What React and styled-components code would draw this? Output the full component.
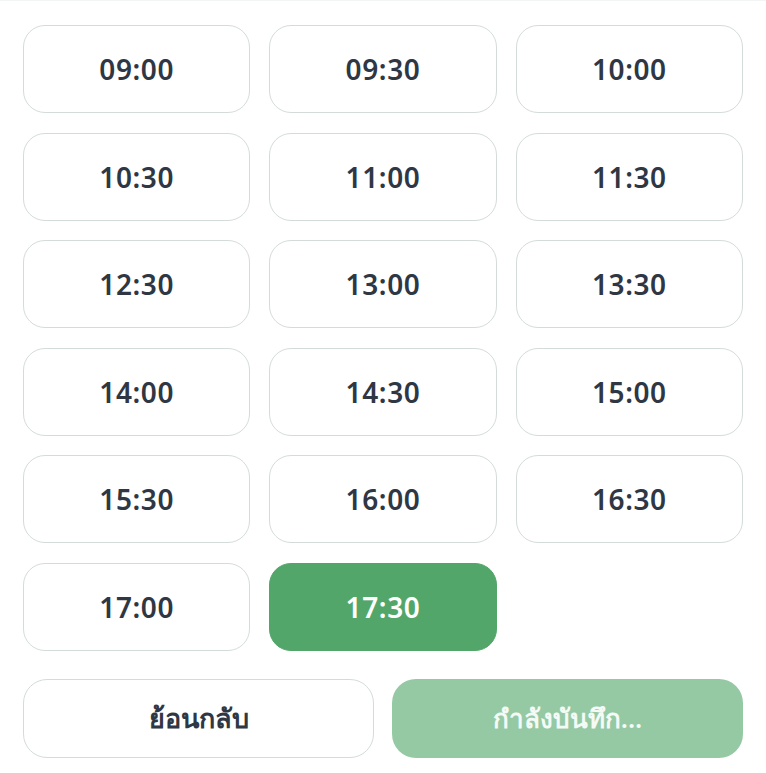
import styled, { createGlobalStyle } from "styled-components";

const GlobalStyle = createGlobalStyle`
  html, body {
    margin: 0;
    padding: 0;
    background: #ffffff;
  }
  body {
    font-family: "Noto Sans", "Open Sans", sans-serif;
  }
`;

const SLOTS = [
  "09:00", "09:30", "10:00",
  "10:30", "11:00", "11:30",
  "12:30", "13:00", "13:30",
  "14:00", "14:30", "15:00",
  "15:30", "16:00", "16:30",
  "17:00", "17:30",
];

function App() {
  const selected = "17:30";
  return (
    <>
      <GlobalStyle />
      <Page>
        <SlotGrid>
          {SLOTS.map((t) => (
            <SlotButton key={t} $active={t === selected}>
              {t}
            </SlotButton>
          ))}
        </SlotGrid>
        <Actions>
          <BackButton>ย้อนกลับ</BackButton>
          <SaveButton disabled>กำลังบันทึก...</SaveButton>
        </Actions>
      </Page>
    </>
  );
}

const Page = styled.div`
  width: 766px;
  height: 773px;
  box-sizing: border-box;
  padding: 24px 23px 0 23px;
  background: #fff;
  border-top: 1px solid #f3f4f4;
`;

const SlotGrid = styled.div`
  display: grid;
  grid-template-columns: repeat(3, 1fr);
  column-gap: 19px;
  row-gap: 19.5px;
`;

const SlotButton = styled.button`
  height: 88px;
  border-radius: 22px;
  border: 1.5px solid ${(p) => (p.$active ? "#52a66a" : "#d4dcda")};
  background: ${(p) => (p.$active ? "#52a66a" : "#ffffff")};
  color: ${(p) => (p.$active ? "#ffffff" : "#2f3744")};
  font-family: "Noto Sans", sans-serif;
  font-size: 28px;
  font-weight: 600;
  letter-spacing: 0.6px;
  cursor: pointer;
`;

const Actions = styled.div`
  display: grid;
  grid-template-columns: 1fr 1fr;
  column-gap: 18px;
  margin-top: 28px;
`;

const BackButton = styled.button`
  height: 79px;
  border-radius: 24px;
  border: 1.5px solid #d4dcda;
  background: #fff;
  color: #2f3744;
  font-family: "Noto Sans", sans-serif;
  font-size: 27px;
  font-weight: 600;
`;

const SaveButton = styled.button`
  height: 79px;
  border-radius: 24px;
  border: none;
  background: #95c9a3;
  color: #f4faf6;
  font-family: "Noto Sans", sans-serif;
  font-size: 26px;
  font-weight: 600;
`;

export default App;
